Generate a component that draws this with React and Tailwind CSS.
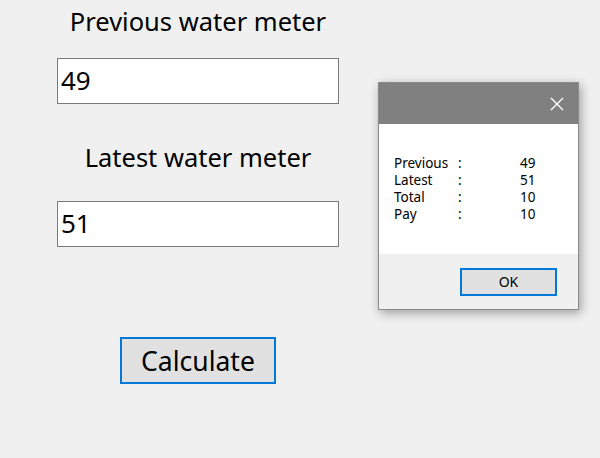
import React from 'react'

const rows = [
  ['Previous', '49'],
  ['Latest', '51'],
  ['Total', '10'],
  ['Pay', '10'],
]

export default function App() {
  return (
    <div
      className="relative w-[600px] h-[458px] overflow-hidden bg-[#f0f0f0] text-[#000]"
      style={{ fontFamily: '"Noto Sans", "Open Sans", sans-serif' }}
    >
      {/* Main form */}
      <div className="flex flex-col items-center w-[282px] ml-[57px]">
        <div className="mt-[3px] h-[36px] text-[25.5px] leading-[36px]">Previous water meter</div>
        <div className="mt-[19px] w-full h-[46px] bg-white border border-[#7a7a7a] pl-[3px] text-[26px] leading-[42px]">
          49
        </div>
        <div className="mt-[35px] h-[36px] text-[25.5px] leading-[36px]">Latest water meter</div>
        <div className="mt-[26px] w-full h-[46px] bg-white border border-[#7a7a7a] pl-[3px] text-[26px] leading-[42px]">
          51
        </div>
        <button className="mt-[90px] w-[156px] h-[47px] bg-[#e1e1e1] border-2 border-[#0078d7] text-[26.5px] leading-[40px]">
          Calculate
        </button>
      </div>

      {/* Message box */}
      <div className="absolute left-[378px] top-[82px] w-[201px] h-[228px] flex flex-col border border-[#8a8a8a] bg-white shadow-[2px_3px_10px_rgba(0,0,0,0.35)]">
        <div className="h-[41px] bg-[#808080] flex items-center justify-end pr-[14px]">
          <svg width="14" height="14" viewBox="0 0 14 14">
            <path d="M1 1 L13 13 M13 1 L1 13" stroke="#ffffff" strokeWidth="1.4" />
          </svg>
        </div>
        <div className="h-[130px] pt-[31px] pl-[15px] text-[13.5px] leading-[17px]">
          {rows.map(([label, value]) => (
            <div key={label} className="flex h-[17px]">
              <span className="w-[64px]">{label}</span>
              <span className="w-[62px]">:</span>
              <span>{value}</span>
            </div>
          ))}
        </div>
        <div className="flex-1 bg-[#f0f0f0] flex justify-end items-start pr-[21px] pt-[14px]">
          <button className="w-[97px] h-[28px] bg-[#e1e1e1] border-2 border-[#0078d7] text-[14px] leading-[22px]">
            OK
          </button>
        </div>
      </div>
    </div>
  )
}
